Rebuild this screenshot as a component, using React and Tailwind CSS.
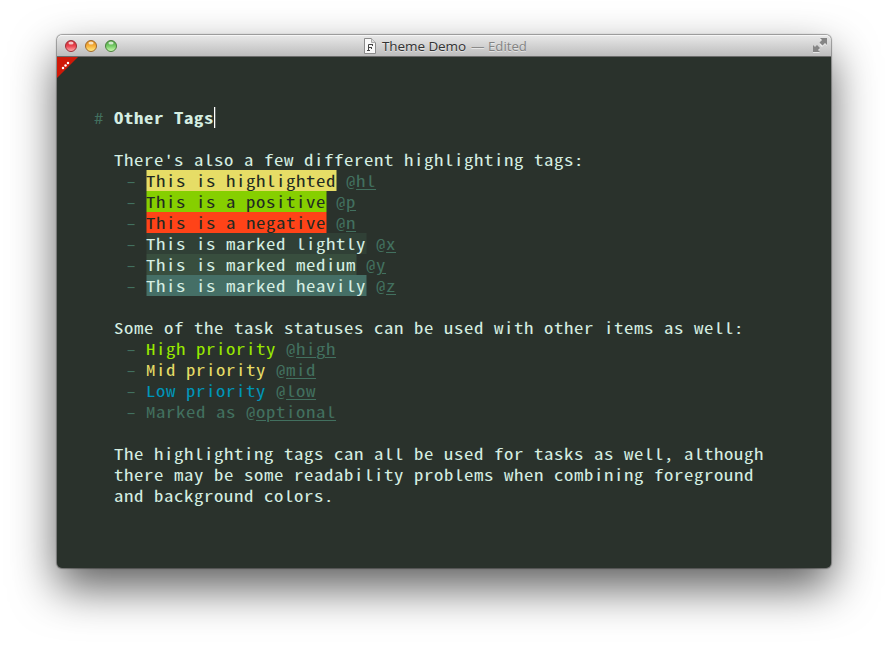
const mono =
  "font-['Noto_Sans_Mono_CJK_SC','Source_Code_Pro','Noto_Sans_Mono','DejaVu_Sans_Mono',monospace]";

function Light({ id, dark, mid, light, rim }) {
  return (
    <svg width="12" height="12" viewBox="0 0 12 12">
      <defs>
        <linearGradient id={id} x1="0" y1="0" x2="0" y2="1">
          <stop offset="0" stopColor={dark} />
          <stop offset="0.5" stopColor={mid} />
          <stop offset="1" stopColor={light} />
        </linearGradient>
      </defs>
      <circle cx="6" cy="6" r="5.5" fill={`url(#${id})`} stroke={rim} strokeWidth="1" />
      <ellipse cx="6" cy="2.9" rx="2.6" ry="1.5" fill="#fff" opacity="0.7" />
    </svg>
  );
}

function TitleBar() {
  return (
    <header className="flex h-[22px] shrink-0 items-center rounded-t-[5px] border-b border-[#6b6b6b] bg-linear-to-b from-[#e9e9e9] to-[#bdbdbd] pr-1 pl-2 shadow-[inset_0_1px_0_#f6f6f6]">
      <div className="flex w-[299px] gap-2">
        <Light id="close" dark="#c9252d" mid="#ec4450" light="#ffb3b3" rim="#9c3038" />
        <Light id="minimise" dark="#d98718" mid="#f8b13c" light="#fff08a" rim="#a0692c" />
        <Light id="zoom" dark="#4c9d40" mid="#76cc67" light="#d0ffb4" rim="#4b7f3e" />
      </div>
      <svg width="12" height="16" viewBox="0 0 12 16" className="mr-[6px]">
        <path d="M.5 .5H7.500L11.500 4.500V15.500H.5Z" fill="#f8f8f8" stroke="#8b8b8b" />
        <path d="M7.500 .5V4.500H11.500" fill="#ddd" stroke="#aaa" />
        <path d="M4.500 12V6.500H8.500M4.500 9.500H7.500M3 12.500H6M8.500 6V8M7.500 9V11" fill="none" stroke="#444" />
      </svg>
      <div className="flex flex-1 items-center whitespace-pre font-['Open_Sans','Noto_Sans',sans-serif] text-[13.500px] leading-5 [text-shadow:0_1px_0_rgba(255,255,255,0.5)]">
        <span className="w-[89px] font-medium tracking-[-0.080px] text-[#333]">Theme Demo</span>
        <span className="w-[17px] text-[#8a8a8a]">—</span>
        <span className="text-[13.200px] text-[#838383]">Edited</span>
      </div>
      <svg width="14" height="15" viewBox="0 0 14 15">
        <g fill="#fff" opacity="0.6" transform="translate(0 1)">
          <path d="M7 0H14V7L12 5L9 8L6.500 5.500L9 3Z" />
          <path d="M0 7L2 9L4 7L7 10L5 12L7 14H0Z" />
        </g>
        <g fill="#858585">
          <path d="M7 0H14V7L12 5L9.500 7.500L6.500 4.500L9 2Z" />
          <path d="M0 7L2 9L4 7L7 10L5 12L7 14H0Z" />
        </g>
      </svg>
    </header>
  );
}

function Item({ tag, tone, children }) {
  return (
    <li className="flex h-[21px] pl-[25.600px] text-[#42705f]">
      <span className="w-[16px]">
        <span className="inline-block scale-x-130">-</span>
      </span>
      <span className={tone}>{children}</span>
      <span className="pl-[8px]">
        @<span className="underline decoration-1 underline-offset-2">{tag}</span>
      </span>
    </li>
  );
}

function Paragraph({ children }) {
  return <p className="mt-[21px] pl-[16px]">{children}</p>;
}

export default function App() {
  return (
    <div className="h-[647px] w-[888px] overflow-hidden bg-white pt-[35px] pl-[57px]">
      <div className="flex h-[533px] w-[774px] flex-col rounded-[5px] bg-[#2a322c] shadow-[0_0_1px_1px_rgba(0,0,0,0.35),0_20px_45px_rgba(0,0,0,0.63)]">
        <TitleBar />
        <main className="relative flex-1 pt-[50px] pl-[37px]">
          <svg width="21" height="21" viewBox="0 0 21 21" className="absolute top-0 left-0">
            <path d="M0 0H21L0 21Z" fill="#cf1908" />
            <g fill="#fff">
              <circle cx="6" cy="11" r="1.250" />
              <circle cx="8.500" cy="8.500" r="1.250" />
              <circle cx="11" cy="6" r="1.250" />
            </g>
          </svg>
          <div
            className={`${mono} w-[576px] origin-left scale-x-125 whitespace-pre text-[15px] leading-[21px] tracking-[0.500px] text-[#d5eee2]`}
          >
            <h1 className="flex font-bold">
              <span className="w-[16px] font-normal text-[#42705f]">#</span>
              <span>Other Tags</span>
              <span className="h-[21px] w-[0.800px] bg-white" />
            </h1>
            <Paragraph>There's also a few different highlighting tags:</Paragraph>
            <ul>
              <Item tag="hl" tone="bg-[#e6dd66] text-[#222a22]">This is highlighted</Item>
              <Item tag="p" tone="bg-[#86cf00] text-[#222a22]">This is a positive</Item>
              <Item tag="n" tone="bg-[#ff4318] text-[#222a22]">This is a negative</Item>
              <Item tag="x" tone="bg-[#304036] text-[#d5eee2]">This is marked lightly</Item>
              <Item tag="y" tone="bg-[#384e3e] text-[#d5eee2]">This is marked medium</Item>
              <Item tag="z" tone="bg-[#456f66] text-[#d5eee2]">This is marked heavily</Item>
            </ul>
            <Paragraph>Some of the task statuses can be used with other items as well:</Paragraph>
            <ul>
              <Item tag="high" tone="text-[#98e800]">High priority</Item>
              <Item tag="mid" tone="text-[#e6dd66]">Mid priority</Item>
              <Item tag="low" tone="text-[#0095b8]">Low priority</Item>
              <Item tag="optional" tone="text-[#42705f]">Marked as</Item>
            </ul>
            <Paragraph>
              {"The highlighting tags can all be used for tasks as well, although\nthere may be some readability problems when combining foreground\nand background colors."}
            </Paragraph>
          </div>
        </main>
      </div>
    </div>
  );
}
